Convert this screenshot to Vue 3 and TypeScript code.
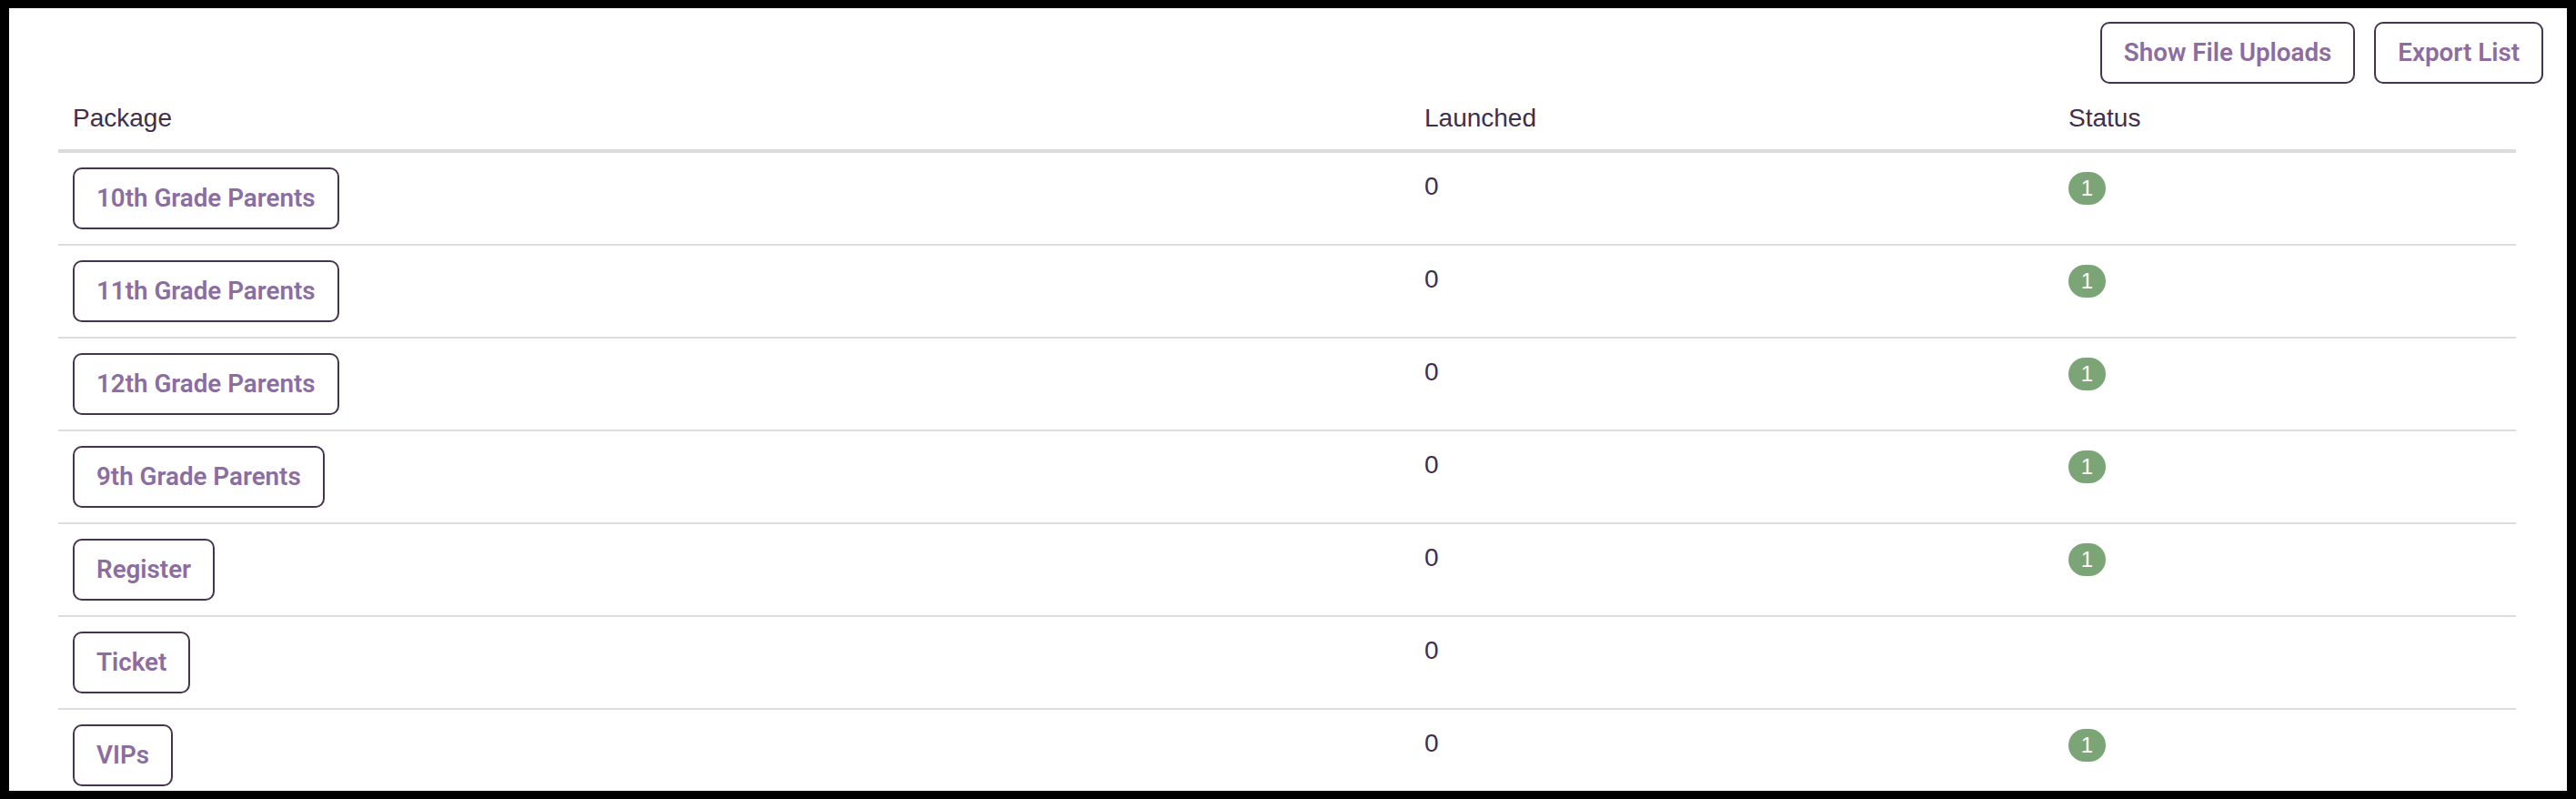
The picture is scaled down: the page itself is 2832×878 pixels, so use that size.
<script setup lang="ts">
interface Row {
  name: string
  launched: number
  status: number | null
}

const rows: Row[] = [
  { name: '10th Grade Parents', launched: 0, status: 1 },
  { name: '11th Grade Parents', launched: 0, status: 1 },
  { name: '12th Grade Parents', launched: 0, status: 1 },
  { name: '9th Grade Parents', launched: 0, status: 1 },
  { name: 'Register', launched: 0, status: 1 },
  { name: 'Ticket', launched: 0, status: null },
  { name: 'VIPs', launched: 0, status: 1 },
]
</script>

<template>
  <div class="frame">
    <div class="toolbar">
      <button class="btn" type="button">Show File Uploads</button>
      <button class="btn" type="button">Export List</button>
    </div>
    <table class="list">
      <colgroup>
        <col class="col-package" />
        <col class="col-launched" />
        <col class="col-status" />
      </colgroup>
      <thead>
        <tr>
          <th>Package</th>
          <th>Launched</th>
          <th>Status</th>
        </tr>
      </thead>
      <tbody>
        <tr v-for="row in rows" :key="row.name">
          <td><button class="btn" type="button">{{ row.name }}</button></td>
          <td class="num">{{ row.launched }}</td>
          <td class="stat">
            <span v-if="row.status !== null" class="badge">{{ row.status }}</span>
          </td>
        </tr>
      </tbody>
    </table>
  </div>
</template>

<style>
html,
body {
  margin: 0;
  background: #000;
  overflow: hidden;
}
</style>

<style scoped>
.frame {
  box-sizing: border-box;
  width: 2832px;
  height: 878px;
  border-style: solid;
  border-color: #000;
  border-width: 9px 10px;
  background: #fff;
  overflow: hidden;
  color: #3f2e4c;
  font-family: "Liberation Sans", Arial, sans-serif;
  font-size: 28px;
}
.toolbar {
  display: flex;
  justify-content: flex-end;
  gap: 21px;
  padding: 15px 26px 0 0;
}
.btn {
  display: block;
  box-sizing: border-box;
  height: 68px;
  padding: 0 24px;
  border: 2px solid #44344f;
  border-radius: 10px;
  background: #fff;
  color: #8c6d9f;
  font-family: Roboto, sans-serif;
  font-size: 27.75px;
  font-weight: 600;
  line-height: 60px;
  white-space: nowrap;
}
.list {
  width: 2702px;
  margin-left: 54px;
  table-layout: fixed;
  border-collapse: separate;
  border-spacing: 0;
}
.col-package {
  width: 1486px;
}
.col-launched {
  width: 708px;
}
.col-status {
  width: 508px;
}
th {
  height: 76px;
  box-sizing: border-box;
  padding: 22px 16px 0;
  border-bottom: 4px solid #dcdcdc;
  text-align: left;
  font-weight: 400;
  vertical-align: top;
  line-height: 32px;
}
td {
  padding: 16px;
  border-bottom: 2px solid #dcdcdc;
  vertical-align: top;
  line-height: 40px;
}
.num {
  padding-top: 17px;
}
.stat {
  padding-top: 21px;
}
.badge {
  display: block;
  width: 41px;
  height: 36px;
  border-radius: 18px;
  background: #7ba577;
  color: #fff;
  font-size: 24px;
  line-height: 36px;
  text-align: center;
}
</style>
